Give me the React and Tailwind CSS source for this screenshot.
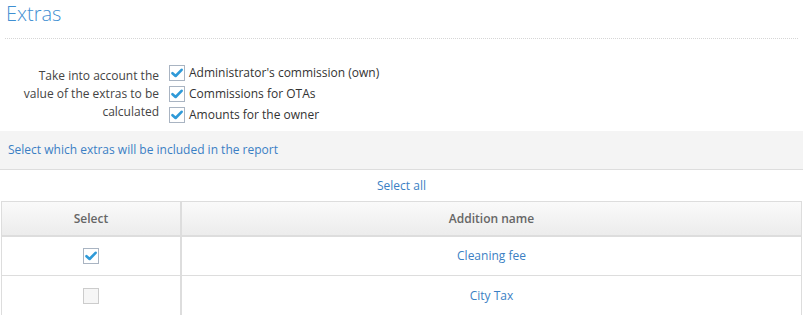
const Tick = () => (
    <svg viewBox="0 0 12 12" className="w-[12px] h-[12px]">
        <path d="M1.5 6.2 L4.6 9 L10.6 2.8" fill="none" stroke="#2f9ad8" strokeWidth="2.6" strokeLinecap="round" strokeLinejoin="round" />
    </svg>
);

const Box = ({ checked }) => (
    <span
        className={`flex items-center justify-center w-[16px] h-[16px] border ${
            checked ? 'border-[#a9b4c2] bg-white' : 'border-[#cccccc] bg-[#f6f6f6]'
        }`}
    >
        {checked && <Tick />}
    </span>
);

const options = ['Administrator\'s commission (own)', 'Commissions for OTAs', 'Amounts for the owner'];

const rows = [
    { name: 'Cleaning fee', checked: true },
    { name: 'City Tax', checked: false },
];

export default function App() {
    return (
        <div className="w-[803px] h-[315px] overflow-hidden bg-white text-[12px] text-[#333] font-['Open_Sans',sans-serif]">
            {/* Title */}
            <div className="h-[39px] border-b border-dotted border-[#d6d6d6] mx-[5px] pl-[1px]">
                <h2 className="text-[20px] font-light leading-[27px] text-[#3f8fd2]">Extras</h2>
            </div>

            {/* Options */}
            <div className="flex items-center pt-[26px] pb-[8px] h-[92px]">
                <div className="w-[159px] text-right leading-[18px] text-[#444] pl-[8px]">
                    Take into account the value of the extras to be calculated
                </div>
                <div className="flex flex-col gap-[5px] pl-[10px]">
                    {options.map((o) => (
                        <label key={o} className="flex items-center gap-[4px] h-[16px]">
                            <Box checked />
                            <span className="text-[#333]">{o}</span>
                        </label>
                    ))}
                </div>
            </div>

            {/* Band */}
            <div className="h-[39px] bg-[#f4f4f4] border-b border-[#dddddd] flex items-center px-[8px] text-[#3b7fc4]">
                Select which extras will be included in the report
            </div>

            {/* Select all */}
            <div className="h-[31px] flex items-center justify-center text-[#3b7fc4]">Select all</div>

            {/* Table */}
            <div className="ml-[1px] w-[801px] border border-[#dddddd]">
                <div className="flex h-[35px] bg-gradient-to-b from-[#fafafa] to-[#ececec] border-b-2 border-[#dddddd] font-semibold text-[#666]">
                    <div className="w-[180px] flex items-center justify-center border-r-2 border-[#dddddd]">Select</div>
                    <div className="flex-1 flex items-center justify-center">Addition name</div>
                </div>
                {rows.map((r, i) => (
                    <div
                        key={r.name}
                        className={`flex h-[39px] ${i < rows.length - 1 ? 'border-b border-[#dddddd]' : ''}`}
                    >
                        <div className="w-[180px] flex items-center justify-center border-r-2 border-[#dddddd]">
                            <Box checked={r.checked} />
                        </div>
                        <div className="flex-1 flex items-center justify-center text-[#3b7fc4]">{r.name}</div>
                    </div>
                ))}
            </div>
        </div>
    );
}
